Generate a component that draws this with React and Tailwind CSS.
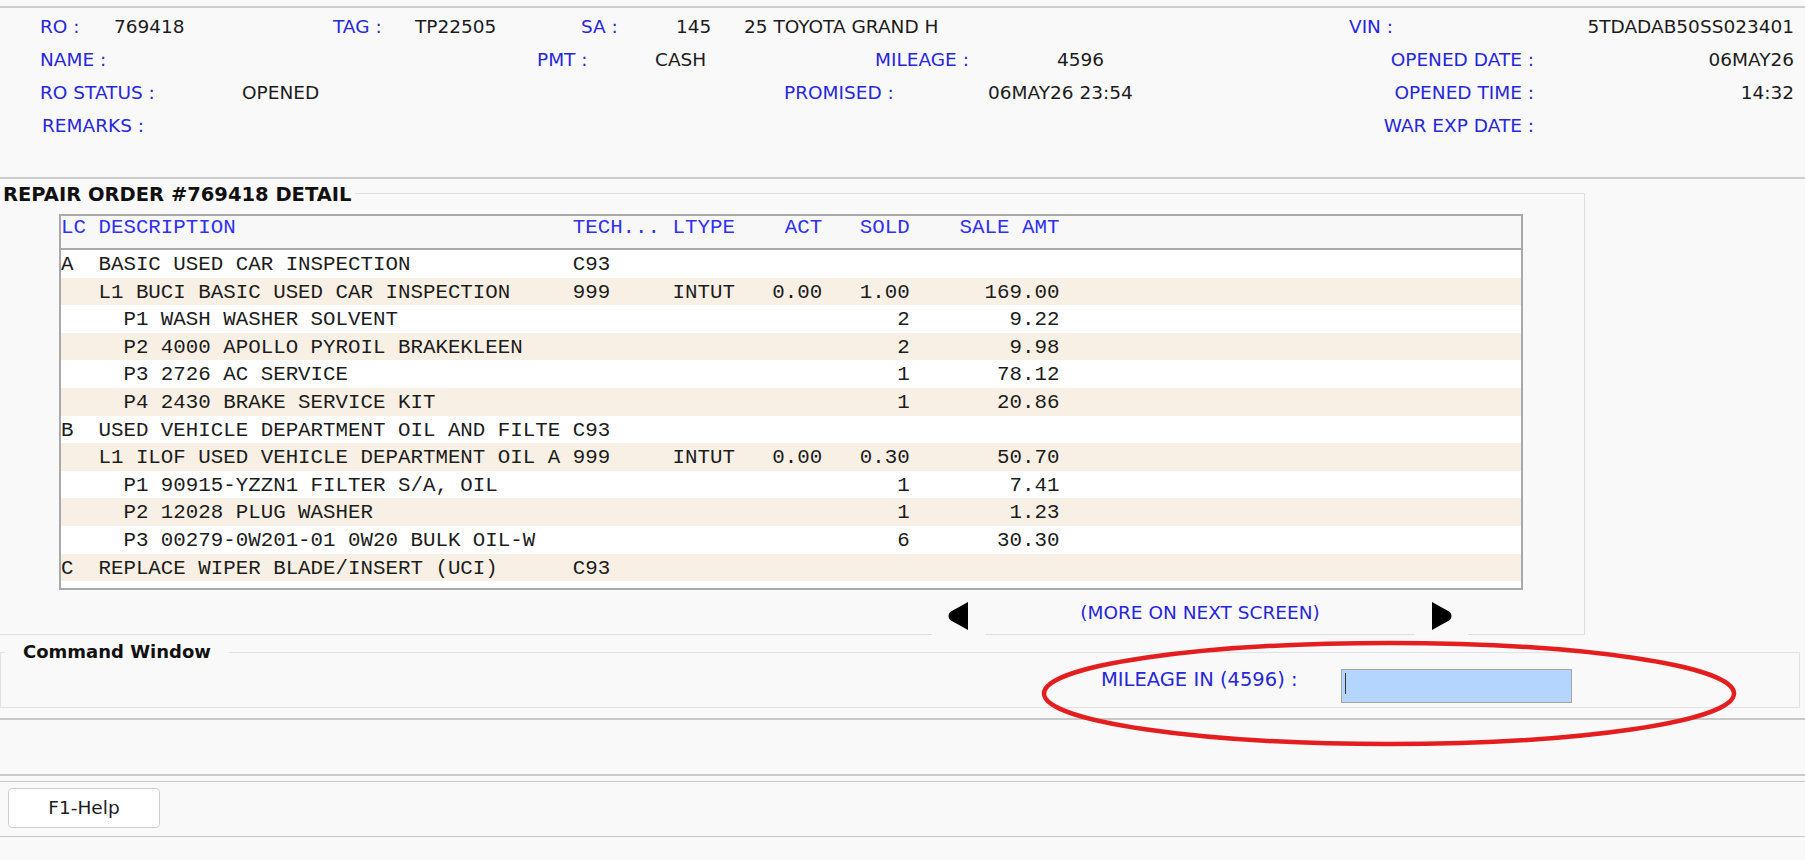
import React from 'react';

const rows = [
  { lc: 'A', d: 'BASIC USED CAR INSPECTION', t: 'C93' },
  { d: 'L1 BUCI BASIC USED CAR INSPECTION', t: '999', l: 'INTUT', a: '0.00', s: '1.00', m: '169.00' },
  { d: '  P1 WASH WASHER SOLVENT', s: '2', m: '9.22' },
  { d: '  P2 4000 APOLLO PYROIL BRAKEKLEEN', s: '2', m: '9.98' },
  { d: '  P3 2726 AC SERVICE', s: '1', m: '78.12' },
  { d: '  P4 2430 BRAKE SERVICE KIT', s: '1', m: '20.86' },
  { lc: 'B', d: 'USED VEHICLE DEPARTMENT OIL AND FILTE', t: 'C93' },
  { d: 'L1 ILOF USED VEHICLE DEPARTMENT OIL A', t: '999', l: 'INTUT', a: '0.00', s: '0.30', m: '50.70' },
  { d: '  P1 90915-YZZN1 FILTER S/A, OIL', s: '1', m: '7.41' },
  { d: '  P2 12028 PLUG WASHER', s: '1', m: '1.23' },
  { d: '  P3 00279-0W201-01 0W20 BULK OIL-W', s: '6', m: '30.30' },
  { lc: 'C', d: 'REPLACE WIPER BLADE/INSERT (UCI)', t: 'C93' },
];

// fixed-width line, like the terminal screen it came from
function line(r) {
  return (
    (r.lc || '').padEnd(3) +
    (r.d || '').padEnd(38) +
    (r.t || '').padEnd(8) +
    (r.l || '').padEnd(5) +
    (r.a || '').padStart(7) +
    (r.s || '').padStart(7) +
    (r.m || '').padStart(12)
  );
}

const header = line({ lc: 'LC', d: 'DESCRIPTION', t: 'TECH...', l: 'LTYPE', a: 'ACT', s: 'SOLD', m: 'SALE AMT' });

const Label = ({ children, className = '' }) => (
  <span className={`text-[#2727d8] whitespace-pre ${className}`}>{children}</span>
);
const Value = ({ children, className = '' }) => (
  <span className={`text-[#1c1c1c] whitespace-pre ${className}`}>{children}</span>
);

function Arrow({ right }) {
  return (
    <div className={`w-[53px] h-[43px] mt-[5px] bg-[#f9f9f9] flex items-start ${right ? 'pl-[17px]' : 'pl-[15px]'}`}>
      <svg width="21" height="28" viewBox="0 0 21 28" className="mt-[7px]">
        {right ? (
          <path d="M0 0 L0 28 L18 18 Q21 14 18 10 Z" fill="#000" />
        ) : (
          <path d="M21 0 L21 28 L3 18 Q0 14 3 10 Z" fill="#000" />
        )}
      </svg>
    </div>
  );
}

export default function App() {
  return (
    <div className="relative w-[1805px] h-[860px] overflow-hidden bg-[#f9f9f9] pt-[6px] font-['DejaVu_Sans',sans-serif] text-[18.5px]">
      {/* RO header */}
      <div className="border-t-2 border-b-2 border-[#cdcdcd] h-[173px] pt-[2px]">
        <div className="flex items-center h-[33px] pl-[40px] pr-[11px]">
          <Label className="w-[74px]">RO :</Label>
          <Value className="w-[219px]">769418</Value>
          <Label className="w-[82px]">TAG :</Label>
          <Value className="w-[166px]">TP22505</Value>
          <Label className="w-[95px]">SA :</Label>
          <Value className="w-[68px]">145</Value>
          <Value className="w-[605px]">25 TOYOTA GRAND H</Value>
          <Label className="flex-1">VIN :</Label>
          <Value>5TDADAB50SS023401</Value>
        </div>
        <div className="flex items-center h-[33px] pl-[40px] pr-[11px]">
          <Label className="w-[497px]">NAME :</Label>
          <Label className="w-[118px]">PMT :</Label>
          <Value className="w-[220px]">CASH</Value>
          <Label className="w-[182px]">MILEAGE :</Label>
          <Value className="flex-1">4596</Value>
          <Label>OPENED DATE :</Label>
          <Value className="w-[260px] text-right">06MAY26</Value>
        </div>
        <div className="flex items-center h-[33px] pl-[40px] pr-[11px]">
          <Label className="w-[202px]">RO STATUS :</Label>
          <Value className="w-[542px]">OPENED</Value>
          <Label className="w-[204px]">PROMISED :</Label>
          <Value className="flex-1">06MAY26 23:54</Value>
          <Label>OPENED TIME :</Label>
          <Value className="w-[260px] text-right">14:32</Value>
        </div>
        <div className="flex items-center h-[33px] pl-[42px] pr-[11px]">
          <Label className="flex-1">REMARKS :</Label>
          <Label>WAR EXP DATE :</Label>
          <span className="w-[260px]" />
        </div>
      </div>

      {/* detail fieldset */}
      <fieldset className="w-[1585px] border-t border-r border-b border-l-0 border-[#dedede] p-0 m-0">
        <legend className="px-[3px] leading-[28px] font-bold text-[19.5px] text-[#111]">
          <span className="relative top-[2px]">REPAIR ORDER #769418 DETAIL</span>
        </legend>
        <div className="pt-[7px] pl-[59px]">
          <div className="w-[1464px] border-2 border-[#a9a9a9] bg-white font-['Liberation_Mono',monospace] text-[20.8px]">
            <div className="h-[34px] bg-[#f8f8f8] border-b-2 border-[#a9a9a9] text-[#3030f0] leading-[24px] whitespace-pre">
              {header}
            </div>
            <div className="pb-[7px]">
              {rows.map((r, i) => (
                <div
                  key={i}
                  className={`h-[27.6px] pt-[2px] leading-[25.6px] whitespace-pre text-[#1c1c1c] ${i % 2 ? 'bg-[#f8f0e5]' : 'bg-white'}`}
                >
                  {line(r)}
                </div>
              ))}
            </div>
          </div>
        </div>
        <div className="h-[44px] flex items-start pl-[932px]">
          <Arrow />
          <div className="w-[430px] mt-[11px] leading-[24px] text-center text-[#2727d8]">(MORE ON NEXT SCREEN)</div>
          <Arrow right />
        </div>
      </fieldset>

      {/* command window */}
      <div className="mt-[4px] h-[81px] border-b-2 border-[#c8c8c8]">
        <fieldset className="w-[1800px] border border-[#e2e2e2] pl-[4px] m-0">
          <legend className="px-[18px] leading-[26px] font-bold text-[18px] text-[#111]">Command Window</legend>
          <div className="h-[42px] flex items-center pl-[1096px]">
            <Label className="w-[240px] text-[19.5px] -mt-[14px]">MILEAGE IN (4596) :</Label>
            <div className="w-[231px] h-[34px] bg-[#b4d5fe] border border-[#a4a4a4] pl-[3px] pt-[3px]">
              <div className="w-px h-[21px] bg-[#333]" />
            </div>
          </div>
        </fieldset>
      </div>

      <div className="h-[56px] border-b-2 border-[#cacaca]" />
      <div className="mt-[5px] h-[56px] border-t border-b border-[#c8c8c8] pt-[6px] pl-[8px]">
        <button className="w-[152px] h-[40px] bg-white border border-[#cfcfcf] rounded-[4px] text-[#1c1c1c] text-[18.5px]">
          F1-Help
        </button>
      </div>

      {/* annotation ring */}
      <svg className="absolute left-[1040px] top-[638px]" width="700" height="112" viewBox="0 0 700 112">
        <ellipse cx="349" cy="55.5" rx="345" ry="50.5" fill="none" stroke="#e41e1e" strokeWidth="4.5" />
      </svg>
    </div>
  );
}
